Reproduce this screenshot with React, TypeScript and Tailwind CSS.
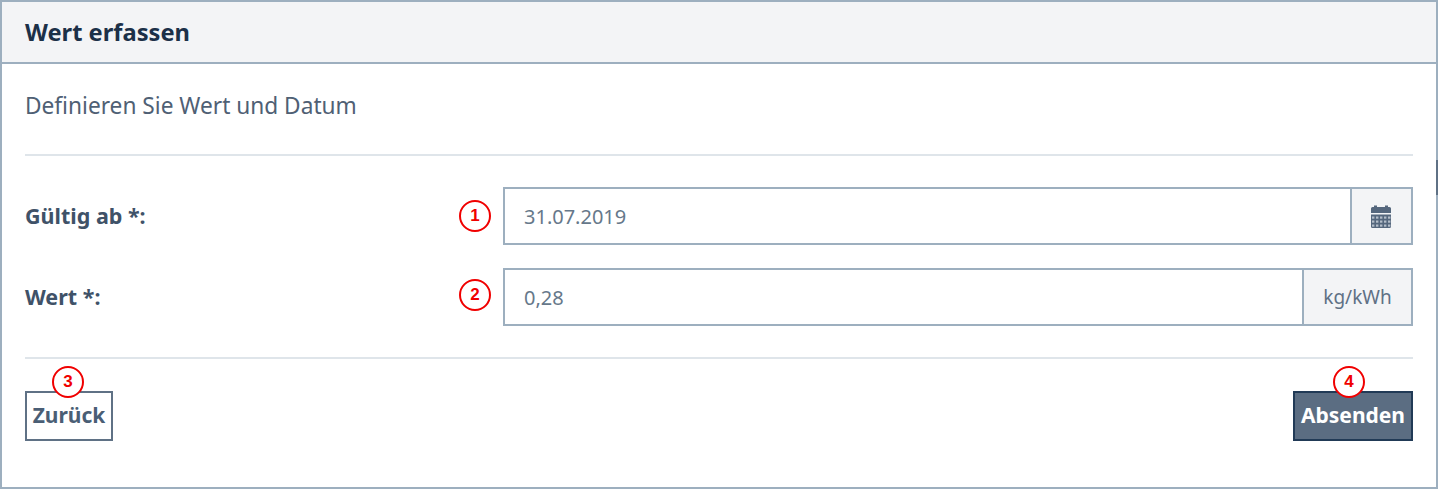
function CalendarIcon() {
  const rows = [11.5, 15.5, 19.5];
  const cols = [2, 6, 10, 14, 18];
  return (
    <svg width="22" height="23" viewBox="0 0 22 23" className="text-[#55677d] -ml-[1px]">
      <path d="M1 8V3.5Q1 2 2.5 2H4V0.5H7V2H15V0.5H18V2H19.5Q21 2 21 3.5V8Z" fill="currentColor" />
      <path d="M1 9.5H21V21.5Q21 23 19.5 23H2.5Q1 23 1 21.5Z" fill="currentColor" />
      {rows.map(y => cols.map(x => (
        <rect key={`${x}-${y}`} x={x} y={y} width="2.4" height="2.2" fill="#b4bec9" />
      )))}
    </svg>
  );
}

function Marker({ n, className }: { n: number; className: string }) {
  return (
    <span className={`absolute w-[32px] h-[32px] rounded-full border-2 border-[#f00000] bg-white text-[#f00000] text-[17px] font-bold flex items-center justify-center font-['Liberation_Sans',sans-serif] ${className}`}>
      {n}
    </span>
  );
}

function Field({ label, n, value, addon, addonClass, markerClass }: { label: string; n: number; value: string; addon: React.ReactNode; addonClass: string; markerClass: string }) {
  return (
    <div className="flex items-center h-[58px]">
      <label className="w-[478px] text-[21.5px] font-bold text-[#3f5268] mt-[1px]">{label}</label>
      <div className="relative flex-1 flex h-[58px] border-2 border-[#9dafbf]">
        <Marker n={n} className={markerClass} />
        <div className="flex-1 pl-[19px] pt-[1px] flex items-center text-[20px] text-[#66788a]">{value}</div>
        <div className={`flex items-center justify-center border-l-2 border-[#9dafbf] bg-[#f3f4f6] text-[#5f7185] ${addonClass}`}>{addon}</div>
      </div>
    </div>
  );
}

export default function App() {
  return (
    <div className="relative w-[1438px] h-[489px] bg-white font-['Noto_Sans',sans-serif]">
      <div className="w-[1438px] h-[489px] border-2 border-[#9dafbf] flex flex-col">
        <div className="h-[62px] bg-[#f3f4f6] border-b-2 border-[#9dafbf] flex items-center px-[23px] pt-[2px]">
          <h1 className="text-[23.7px] font-bold text-[#1c3048]">Wert erfassen</h1>
        </div>
        <div className="flex-1 pl-[23px] pr-[23px]">
          <p className="h-[92px] pt-[25px] text-[22.7px] text-[#4f6074] border-b-2 border-[#dfe5ea]">Definieren Sie Wert und Datum</p>
          <div className="flex flex-col gap-[23px] pt-[31px] pb-[31px] border-b-2 border-[#dfe5ea]">
            <Field label="Gültig ab *:" n={1} value="31.07.2019" markerClass="-left-[46px] top-[11px]" addonClass="w-[61px]" addon={<CalendarIcon />} />
            <Field label="Wert *:" n={2} value="0,28" markerClass="-left-[46px] top-[9px]" addonClass="w-[109px] text-[19px] pt-[1px]" addon="kg/kWh" />
          </div>
          <div className="flex justify-between pt-[32px]">
            <button className="relative h-[50px] w-[88px] border-2 border-[#5f7185] bg-white text-[21px] font-bold text-[#4a5e75]">
              Zurück
              <Marker n={3} className="left-[25px] -top-[27px]" />
            </button>
            <button className="relative h-[50px] w-[120px] border-2 border-[#213a56] bg-[#5b6d82] text-[21px] font-bold text-white">
              Absenden
              <Marker n={4} className="left-[38px] -top-[27px]" />
            </button>
          </div>
        </div>
      </div>
      <div className="absolute right-0 top-[160px] w-[2px] h-[35px] bg-[#5f7185]" />
    </div>
  );
}
